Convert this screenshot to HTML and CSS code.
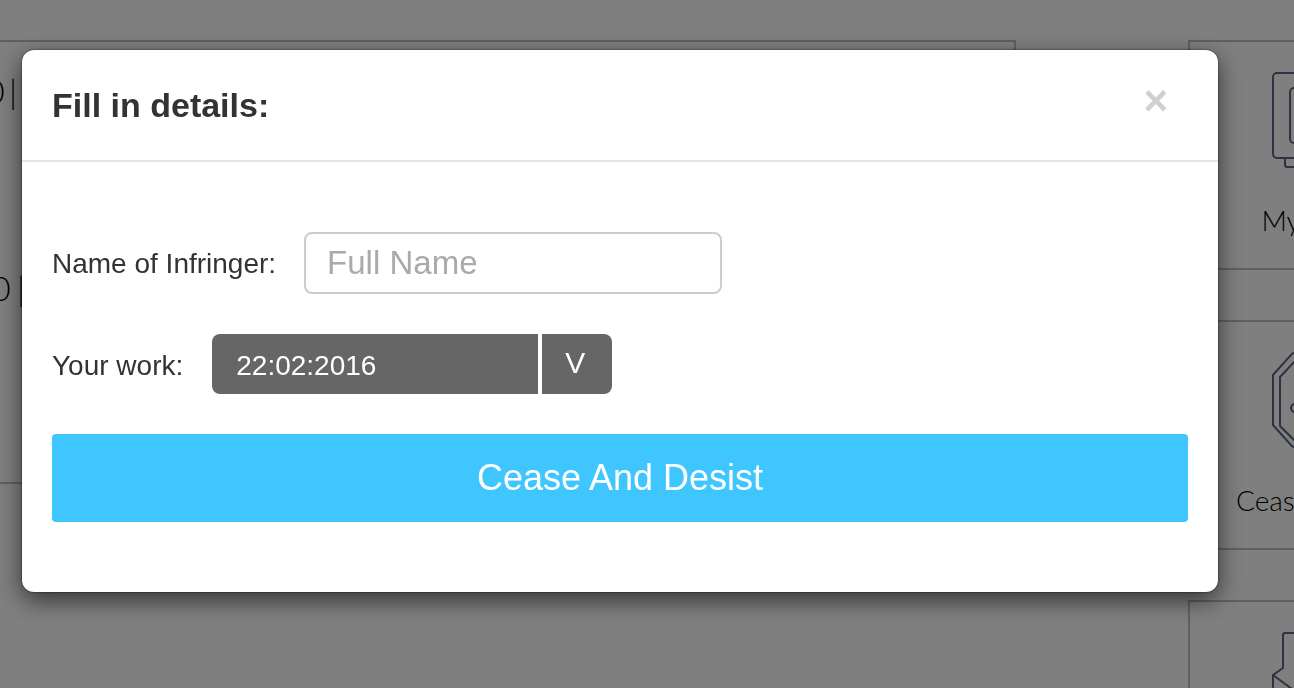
FILE: index.html
```html
<!DOCTYPE html>
<html lang="en">
<head>
    <meta charset="UTF-8">
    <meta name="viewport" content="width=device-width, initial-scale=1.0">
    <title>Fill in details</title>
    <link rel="stylesheet" href="styles.css">
</head>
<body>
    <!-- Page behind the dialog -->
    <div class="page">
        <div class="main-panel">
            <p class="panel-text panel-text-first">0 |</p>
            <p class="panel-text panel-text-second">0 |</p>
        </div>
        <div class="side-column">
            <div class="side-card">
                <svg class="side-icon" width="60" height="100" viewBox="0 0 60 100" fill="none" stroke="#5c6484" stroke-width="2">
                    <rect x="1" y="1" width="58" height="85" rx="4"/>
                    <rect x="18" y="16" width="40" height="55" rx="4"/>
                    <path d="M13 86v7a2 2 0 0 0 2 2h45"/>
                </svg>
                <p class="side-label side-label-short">My Documents</p>
            </div>
            <div class="side-card">
                <svg class="side-icon" width="60" height="100" viewBox="0 0 60 100" fill="none" stroke="#5c6484" stroke-width="2">
                    <path d="M30 1H22a4 4 0 0 0-3 2L1 23v50l18 20a4 4 0 0 0 3 2h8"/>
                    <path d="M30 8H24L8 25v49l14 14h8"/>
                    <circle cx="23" cy="56" r="4"/>
                </svg>
                <p class="side-label">Cease And Desist</p>
            </div>
            <div class="side-card side-card-last">
                <svg class="side-icon" width="60" height="100" viewBox="0 0 60 100" fill="none" stroke="#5c6484" stroke-width="2">
                    <path d="M30 1H13a2 2 0 0 0-2 2V36L1 43V70"/>
                    <path d="M1 43L20 57"/>
                </svg>
            </div>
        </div>
    </div>

    <div class="overlay"></div>

    <!-- Dialog -->
    <div class="modal">
        <div class="modal-header">
            <h2>Fill in details:</h2>
            <span class="close">&times;</span>
        </div>
        <div class="modal-body">
            <div class="form-row">
                <label for="infringer">Name of Infringer:</label>
                <input type="text" id="infringer" placeholder="Full Name">
            </div>
            <div class="form-row form-row-work">
                <label>Your work:</label>
                <div class="date-select">
                    <span class="date-value">22:02:2016</span>
                    <span class="date-arrow">V</span>
                </div>
            </div>
            <button class="btn">Cease And Desist</button>
        </div>
    </div>
</body>
</html>
```

FILE: styles.css
```css
* {
    box-sizing: border-box;
    margin: 0;
    padding: 0;
}

html, body {
    height: 100%;
    overflow: hidden;
}

body {
    font-family: "Liberation Sans", Arial, sans-serif;
    background-color: #fff;
    color: #333;
}

/* Page behind the dialog */
.page {
    display: flex;
    align-items: flex-start;
    justify-content: space-between;
    padding-top: 40px;
    height: 100%;
}

.main-panel {
    width: 1016px;
    height: 444px;
    border: 2px solid #c0c0c0;
    border-left: none;
    font-family: Lato, sans-serif;
    font-weight: 300;
    font-size: 34px;
    word-spacing: -3px;
    color: #000;
}

.panel-text {
    line-height: 40px;
}

.panel-text-first {
    margin: 29px 0 0 -15px;
    word-spacing: -5px;
}

.panel-text-second {
    margin: 157px 0 0 -9px;
}

.side-column {
    width: 106px;
    flex-shrink: 0;
}

.side-card {
    height: 230px;
    margin-bottom: 50px;
    padding: 30px 0 0 82px;
    border: 2px solid #c0c0c0;
    border-right: none;
    overflow: hidden;
}

.side-card-last {
    height: 88px;
    margin-bottom: 0;
    border-bottom: none;
}

.side-icon {
    display: block;
}

.side-label {
    width: 264px;
    margin: 31px 0 0 -62px;
    font-family: Lato, sans-serif;
    font-weight: 300;
    font-size: 28px;
    line-height: 34px;
    text-align: center;
    white-space: nowrap;
    color: #000;
}

.side-label-short {
    padding-left: 24px;
}

/* Dimmed layer */
.overlay {
    position: fixed;
    inset: 0;
    background-color: rgba(0, 0, 0, 0.5);
}

/* Dialog */
.modal {
    position: fixed;
    top: 50px;
    left: 22px;
    width: 1196px;
    height: 542px;
    background: #fff;
    border-radius: 12px;
    box-shadow: 0 8px 24px rgba(0, 0, 0, 0.6), 0 0 2px rgba(0, 0, 0, 0.8);
}

.modal-header {
    display: flex;
    align-items: flex-start;
    justify-content: space-between;
    height: 112px;
    padding: 0 30px;
    border-bottom: 2px solid #e5e5e5;
}

.modal-header h2 {
    margin-top: 36px;
    font-size: 34px;
    line-height: 38px;
    color: #333;
}

.close {
    margin: 28px 20px 0 0;
    font-size: 42px;
    line-height: 46px;
    font-weight: bold;
    color: #d0d0d0;
}

.modal-body {
    padding: 70px 30px 0;
}

.form-row {
    display: flex;
    align-items: center;
    gap: 28px;
    margin-bottom: 40px;
    font-size: 28px;
}

.form-row label {
    padding-top: 2px;
}

.form-row-work {
    gap: 29px;
}

.form-row-work label {
    padding-top: 4px;
}

.form-row input {
    width: 418px;
    height: 62px;
    padding: 0 21px;
    font-family: inherit;
    font-size: 33px;
    color: #333;
    border: 2px solid #ccc;
    border-radius: 8px;
    outline: none;
}

.form-row input::placeholder {
    color: #aaa;
}

.date-select {
    display: flex;
    gap: 4px;
    height: 60px;
    font-size: 28px;
    color: #fff;
}

.date-value {
    width: 326px;
    padding-left: 24px;
    line-height: 64px;
    background-color: #666;
    border-radius: 8px 0 0 8px;
}

.date-arrow {
    width: 70px;
    padding-right: 4px;
    font-size: 30px;
    text-align: center;
    line-height: 58px;
    background-color: #666;
    border-radius: 0 8px 8px 0;
}

.btn {
    display: block;
    width: 100%;
    height: 88px;
    font-family: inherit;
    font-size: 36px;
    color: #fff;
    background-color: #3fc6ff;
    border: none;
    border-radius: 4px;
    cursor: pointer;
}
```
